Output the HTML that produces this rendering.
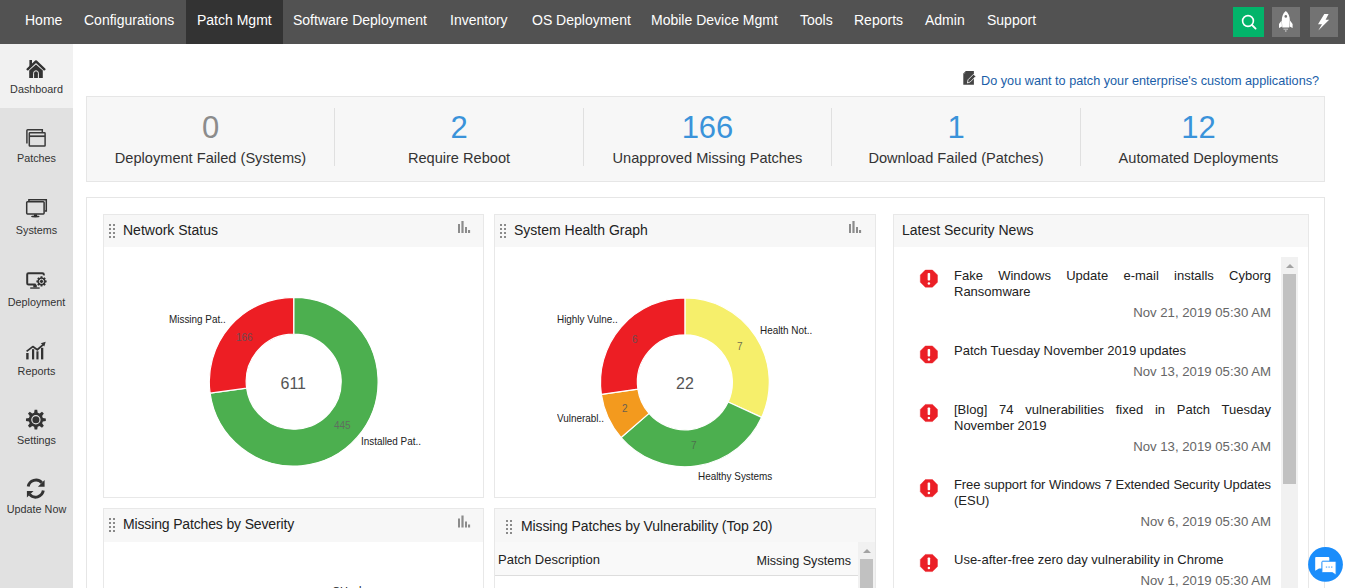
<!DOCTYPE html>
<html><head><meta charset="utf-8">
<style>
*{margin:0;padding:0;box-sizing:border-box}
html,body{width:1345px;height:588px;overflow:hidden;background:#fff;font-family:"Liberation Sans",sans-serif;color:#222}
.a{position:absolute;white-space:nowrap}
#nav{position:absolute;left:0;top:0;width:1345px;height:44px;background:#525252}
#nav .it{position:absolute;top:0;height:44px;line-height:40px;font-size:14px;color:#fff}
#nav .act{background:#333}
.nbtn{position:absolute;top:7px;height:30px}
#side{position:absolute;left:0;top:44px;width:73px;height:544px;background:#e1e1e1}
.si{position:absolute;left:0;width:73px;text-align:center;font-size:10.8px;color:#333}
.box{position:absolute;border:1px solid #e6e6e6}
.sum{background:#f7f7f7}
.num{position:absolute;font-size:31px;text-align:center;color:#3a93da}
.lbl{position:absolute;font-size:14.6px;text-align:center;color:#333}
.sep{position:absolute;top:108px;width:1px;height:58px;background:#e0e0e0}
.w{position:absolute;border:1px solid #e8e8e8;background:#fff}
.wh{position:absolute;left:0;top:0;right:0;height:33px;background:#f7f7f7}
.wt{position:absolute;top:0;line-height:33px;font-size:14px;color:#222}
.dots{position:absolute}
.dots i{position:absolute;width:2px;height:2px;background:#8a8a8a}
.news{position:absolute;font-size:13px;color:#222}
.nl{position:absolute;left:954px;width:317px;font-size:13px;color:#222;white-space:nowrap}
.nl.j{text-align:justify;text-align-last:justify}
.nd{position:absolute;left:1000px;width:271px;text-align:right;font-size:13.2px;color:#666;white-space:nowrap}
.cl{position:absolute;white-space:nowrap;font-size:11px;color:#222;transform:scaleX(0.9);transform-origin:0 0}
</style></head><body>
<div id="nav">
  <div class="it" style="left:25px">Home</div>
  <div class="it" style="left:84px">Configurations</div>
  <div class="it act" style="left:186px;width:97px;padding-left:11px">Patch Mgmt</div>
  <div class="it" style="left:293px">Software Deployment</div>
  <div class="it" style="left:450px">Inventory</div>
  <div class="it" style="left:532px">OS Deployment</div>
  <div class="it" style="left:651px">Mobile Device Mgmt</div>
  <div class="it" style="left:800px">Tools</div>
  <div class="it" style="left:854px">Reports</div>
  <div class="it" style="left:925px">Admin</div>
  <div class="it" style="left:987px">Support</div>
  <div class="nbtn" style="left:1233px;width:31px;background:#02b46a"></div>
  <div class="nbtn" style="left:1272px;width:28px;background:#737373"></div>
  <div class="nbtn" style="left:1310px;width:28px;background:#737373"></div>
</div>
<div id="side">
  <div style="position:absolute;left:0;top:0;width:73px;height:64px;background:#f1f1f1"></div>
  <div class="si" style="top:39px">Dashboard</div>
  <div class="si" style="top:108px">Patches</div>
  <div class="si" style="top:180px">Systems</div>
  <div class="si" style="top:252px">Deployment</div>
  <div class="si" style="top:321px">Reports</div>
  <div class="si" style="top:390px">Settings</div>
  <div class="si" style="top:459px">Update Now</div>
</div>
<!-- link -->
<div class="a" style="left:981px;top:74px;font-size:12.7px;color:#1a5ea8">Do you want to patch your enterprise's custom applications?</div>
<!-- summary -->
<div class="box sum" style="left:86px;top:96px;width:1239px;height:86px"></div>
<div class="sep" style="left:334px"></div>
<div class="sep" style="left:583px"></div>
<div class="sep" style="left:831px"></div>
<div class="sep" style="left:1080px"></div>
<div class="num" style="left:87px;width:247px;top:110px;color:#8c8c8c">0</div>
<div class="num" style="left:335px;width:248px;top:110px">2</div>
<div class="num" style="left:584px;width:247px;top:110px">166</div>
<div class="num" style="left:832px;width:248px;top:110px">1</div>
<div class="num" style="left:1081px;width:235px;top:110px">12</div>
<div class="lbl" style="left:87px;width:247px;top:149.5px">Deployment Failed (Systems)</div>
<div class="lbl" style="left:335px;width:248px;top:149.5px">Require Reboot</div>
<div class="lbl" style="left:584px;width:247px;top:149.5px">Unapproved Missing Patches</div>
<div class="lbl" style="left:832px;width:248px;top:149.5px">Download Failed (Patches)</div>
<div class="lbl" style="left:1081px;width:235px;top:149.5px">Automated Deployments</div>
<!-- container -->
<div class="box" style="left:86px;top:197px;width:1239px;height:420px"></div>
<!-- widgets -->
<div class="w" style="left:103px;top:214px;width:381px;height:284px"><div class="wh" style="height:32px"></div></div>
<div class="w" style="left:494px;top:214px;width:382px;height:284px"><div class="wh" style="height:32px"></div></div>
<div class="w" style="left:893px;top:214px;width:416px;height:400px"><div class="wh" style="height:32px"></div></div>
<div class="w" style="left:103px;top:508px;width:381px;height:100px"><div class="wh"></div></div>
<div class="w" style="left:494px;top:508px;width:382px;height:100px"><div class="wh"></div></div>
<div class="wt a" style="left:123px;top:214px">Network Status</div>
<div class="wt a" style="left:514px;top:214px">System Health Graph</div>
<div class="wt a" style="left:902px;top:214px">Latest Security News</div>
<div class="wt a" style="left:123px;top:508px;letter-spacing:-0.15px">Missing Patches by Severity</div>
<div class="wt a" style="left:521px;top:510px;letter-spacing:-0.1px">Missing Patches by Vulnerability (Top 20)</div>


<svg class="a" style="left:0;top:0" width="1345" height="588" viewBox="0 0 1345 588">
 <!-- nav icons -->
 <circle cx="1248" cy="21" r="5.4" fill="none" stroke="#fff" stroke-width="1.6"/>
 <line x1="1252" y1="25" x2="1255.6" y2="28.6" stroke="#fff" stroke-width="1.8" stroke-linecap="round"/>
 <path d="M1285.8,11 C1288.5,13 1289.8,16.5 1289.8,20 L1289.3,27.5 L1282.3,27.5 L1281.8,20 C1281.8,16.5 1283.1,13 1285.8,11 Z" fill="#fff"/>
 <circle cx="1285.8" cy="16.4" r="1.3" fill="#747474"/>
 <path d="M1281.6,20.5 L1279,24 L1279,28 L1282,26.5 Z M1290,20.5 L1292.6,24 L1292.6,28 L1289.6,26.5 Z" fill="#fff"/>
 <path d="M1283.5,28.5 H1288 V30 H1286.5 V32 H1285 V30 H1283.5 Z" fill="#aaa"/>
 <path d="M1324.3,14 L1328.6,14 L1325.6,19.8 L1329.2,19.8 L1318.3,30.6 L1322,24.2 L1318,24.2 Z" fill="#fff"/>
 <!-- sidebar icons -->
 <g fill="#333">
  <rect x="29.4" y="60" width="2.6" height="7"/>
  <polyline points="27.6,69.3 36,61.4 44.4,69.3" fill="none" stroke="#333" stroke-width="2.4" stroke-linecap="round" stroke-linejoin="round"/>
  <path d="M29.2,70.6 L36,64.4 L42.8,70.6 V78 H29.2 Z"/>
  <path d="M33.6,78 V73.2 A2.4,2.4 0 0 1 38.4,73.2 V78" fill="none" stroke="#f1f1f1" stroke-width="1"/>
 </g>
 <g fill="none" stroke="#3a3a3a" stroke-width="1.5">
  <path d="M26.9,143.5 V130.6 Q26.9,129.8 27.7,129.8 H42.3 V132.6" />
    <rect x="29.3" y="132.8" width="15.8" height="13.2" rx="0.6" fill="#e1e1e1"/>
  <line x1="29.3" y1="136.2" x2="45.1" y2="136.2" stroke-width="1.7"/>
 </g>
 <g fill="none" stroke="#333" stroke-width="1.5">
  <path d="M28.9,201 V199.8 H46.3 V211 H44.8"/>
  <rect x="26.7" y="201.8" width="17.4" height="12.1" rx="0.8" fill="#e1e1e1"/>
 </g>
 <rect x="34" y="214.5" width="3" height="1.6" fill="#222"/>
 <ellipse cx="35.3" cy="216.5" rx="4.2" ry="0.9" fill="#333"/>
 <g>
  <path d="M41,284.5 H28.5 Q27.2,284.5 27.2,283.2 V274.6 Q27.2,273.3 28.5,273.3 H42.5 Q43.8,273.3 43.8,274.6 V275.5" fill="none" stroke="#333" stroke-width="2"/>
  <rect x="33.3" y="285" width="3.5" height="2.5" fill="#333"/>
  <rect x="30.2" y="287.3" width="9.5" height="1.5" fill="#444"/>
  <circle cx="41.5" cy="281.4" r="6.2" fill="#e1e1e1"/>
  <path d="M40.27,277.70 L40.62,276.27 L42.38,276.27 L42.73,277.70 L43.25,277.91 L44.50,277.15 L45.75,278.40 L44.99,279.65 L45.20,280.17 L46.63,280.52 L46.63,282.28 L45.20,282.63 L44.99,283.15 L45.75,284.40 L44.50,285.65 L43.25,284.89 L42.73,285.10 L42.38,286.53 L40.62,286.53 L40.27,285.10 L39.75,284.89 L38.50,285.65 L37.25,284.40 L38.01,283.15 L37.80,282.63 L36.37,282.28 L36.37,280.52 L37.80,280.17 L38.01,279.65 L37.25,278.40 L38.50,277.15 L39.75,277.91 Z" fill="#333"/><circle cx="41.5" cy="281.4" r="2.1" fill="none" stroke="#e1e1e1" stroke-width="1"/><circle cx="41.5" cy="281.4" r="0.7" fill="#333"/>
 </g>
 <g fill="#333">
  <rect x="26.2" y="353" width="2.4" height="6.4"/>
  <rect x="32" y="349.2" width="2.2" height="10.2"/>
  <rect x="36.4" y="351.3" width="2.1" height="8.1"/>
  <rect x="41" y="347.8" width="2.3" height="11.6"/>
  <polyline points="26.6,351.4 32.8,346.6 37.3,349.8 43.2,344.6" fill="none" stroke="#333" stroke-width="1.8" stroke-linejoin="round"/>
  <path d="M45.7,341.8 L40.8,343.3 L44.3,346.6 Z"/>
 </g>
 <path d="M34.12,412.72 L34.60,409.78 L37.20,409.78 L37.68,412.72 L39.57,413.51 L41.99,411.77 L43.83,413.61 L42.09,416.03 L42.88,417.92 L45.82,418.40 L45.82,421.00 L42.88,421.48 L42.09,423.37 L43.83,425.79 L41.99,427.63 L39.57,425.89 L37.68,426.68 L37.20,429.62 L34.60,429.62 L34.12,426.68 L32.23,425.89 L29.81,427.63 L27.97,425.79 L29.71,423.37 L28.92,421.48 L25.98,421.00 L25.98,418.40 L28.92,417.92 L29.71,416.03 L27.97,413.61 L29.81,411.77 L32.23,413.51 Z" fill="#333"/><circle cx="35.9" cy="419.7" r="4.1" fill="none" stroke="#e1e1e1" stroke-width="1.2"/>
 <g fill="none" stroke="#333" stroke-width="2.9">
  <path d="M28.2,486.6 A7.8,7.8 0 0 1 41.8,482.8"/>
  <path d="M43.3,490.6 A7.8,7.8 0 0 1 29.7,494.4"/>
 </g>
 <path d="M44.6,480 L44.6,486.8 L37.9,486.8 Z M26.9,497.6 L26.9,490.9 L33.5,490.9 Z" fill="#333"/>

 <!-- network donut -->
 <g stroke="#fff" stroke-width="1.2" stroke-linejoin="round">
  <path d="M293.70,297.30 A84.4,84.4 0 1 1 210.08,393.16 L246.64,388.15 A47.5,47.5 0 1 0 293.70,334.20 Z" fill="#4caf4f"/>
  <path d="M210.08,393.16 A84.4,84.4 0 0 1 293.70,297.30 L293.70,334.20 A47.5,47.5 0 0 0 246.64,388.15 Z" fill="#ed1e24"/>
 </g>
 <g stroke="#fff" stroke-width="1.2" stroke-linejoin="round">
  <path d="M684.90,297.90 A84.4,84.4 0 0 1 761.67,417.36 L728.11,402.03 A47.5,47.5 0 0 0 684.90,334.80 Z" fill="#f6ef6b"/>
  <path d="M761.67,417.36 A84.4,84.4 0 0 1 621.11,437.57 L649.00,413.41 A47.5,47.5 0 0 0 728.11,402.03 Z" fill="#4caf4f"/>
  <path d="M621.11,437.57 A84.4,84.4 0 0 1 601.36,394.31 L637.88,389.06 A47.5,47.5 0 0 0 649.00,413.41 Z" fill="#f39a1e"/>
  <path d="M601.36,394.31 A84.4,84.4 0 0 1 684.90,297.90 L684.90,334.80 A47.5,47.5 0 0 0 637.88,389.06 Z" fill="#ed1e24"/>
 </g>
 <!-- widget header bar icons -->
 <g fill="#8c8c8c">
  <rect x="458" y="224" width="2" height="9"/><rect x="461.4" y="221" width="2.2" height="12"/><rect x="465" y="227" width="2" height="6"/><rect x="468" y="230" width="2.1" height="3"/>
  <rect x="849" y="224" width="2" height="9"/><rect x="852.4" y="221" width="2.2" height="12"/><rect x="856" y="227" width="2" height="6"/><rect x="859" y="230" width="2.1" height="3"/>
  <rect x="458" y="518.5" width="2" height="9"/><rect x="461.4" y="515.5" width="2.2" height="12"/><rect x="465" y="521.5" width="2" height="6"/><rect x="468" y="524.5" width="2.1" height="3"/>
 </g>
 <!-- drag handles -->
 <g fill="#8a8a8a">
  <rect x="109" y="224" width="2" height="2"/><rect x="113" y="224" width="2" height="2"/>
  <rect x="109" y="228" width="2" height="2"/><rect x="113" y="228" width="2" height="2"/>
  <rect x="109" y="232" width="2" height="2"/><rect x="113" y="232" width="2" height="2"/>
  <rect x="109" y="236" width="2" height="2"/><rect x="113" y="236" width="2" height="2"/>
  <rect x="500" y="224" width="2" height="2"/><rect x="504" y="224" width="2" height="2"/>
  <rect x="500" y="228" width="2" height="2"/><rect x="504" y="228" width="2" height="2"/>
  <rect x="500" y="232" width="2" height="2"/><rect x="504" y="232" width="2" height="2"/>
  <rect x="500" y="236" width="2" height="2"/><rect x="504" y="236" width="2" height="2"/>
  <rect x="109" y="518" width="2" height="2"/><rect x="113" y="518" width="2" height="2"/>
  <rect x="109" y="522" width="2" height="2"/><rect x="113" y="522" width="2" height="2"/>
  <rect x="109" y="526" width="2" height="2"/><rect x="113" y="526" width="2" height="2"/>
  <rect x="109" y="530" width="2" height="2"/><rect x="113" y="530" width="2" height="2"/>
  <rect x="506" y="520" width="2" height="2"/><rect x="510" y="520" width="2" height="2"/>
  <rect x="506" y="524" width="2" height="2"/><rect x="510" y="524" width="2" height="2"/>
  <rect x="506" y="528" width="2" height="2"/><rect x="510" y="528" width="2" height="2"/>
  <rect x="506" y="532" width="2" height="2"/><rect x="510" y="532" width="2" height="2"/>
 </g>
<polygon points="937.49,282.16 932.46,287.19 925.34,287.19 920.31,282.16 920.31,275.04 925.34,270.01 932.46,270.01 937.49,275.04" fill="#eb1f26" stroke="#eb1f26" stroke-width="0.4" stroke-linejoin="round"/><rect x="927.65" y="273.0" width="2.5" height="7.6" rx="0.8" fill="#fff"/><circle cx="928.9" cy="283.5" r="1.25" fill="#fff"/>
<polygon points="937.49,358.06 932.46,363.09 925.34,363.09 920.31,358.06 920.31,350.94 925.34,345.91 932.46,345.91 937.49,350.94" fill="#eb1f26" stroke="#eb1f26" stroke-width="0.4" stroke-linejoin="round"/><rect x="927.65" y="348.9" width="2.5" height="7.6" rx="0.8" fill="#fff"/><circle cx="928.9" cy="359.4" r="1.25" fill="#fff"/>
<polygon points="937.49,416.56 932.46,421.59 925.34,421.59 920.31,416.56 920.31,409.44 925.34,404.41 932.46,404.41 937.49,409.44" fill="#eb1f26" stroke="#eb1f26" stroke-width="0.4" stroke-linejoin="round"/><rect x="927.65" y="407.4" width="2.5" height="7.6" rx="0.8" fill="#fff"/><circle cx="928.9" cy="417.9" r="1.25" fill="#fff"/>
<polygon points="937.49,491.76 932.46,496.79 925.34,496.79 920.31,491.76 920.31,484.64 925.34,479.61 932.46,479.61 937.49,484.64" fill="#eb1f26" stroke="#eb1f26" stroke-width="0.4" stroke-linejoin="round"/><rect x="927.65" y="482.6" width="2.5" height="7.6" rx="0.8" fill="#fff"/><circle cx="928.9" cy="493.1" r="1.25" fill="#fff"/>
<polygon points="937.49,566.56 932.46,571.59 925.34,571.59 920.31,566.56 920.31,559.44 925.34,554.41 932.46,554.41 937.49,559.44" fill="#eb1f26" stroke="#eb1f26" stroke-width="0.4" stroke-linejoin="round"/><rect x="927.65" y="557.4" width="2.5" height="7.6" rx="0.8" fill="#fff"/><circle cx="928.9" cy="567.9" r="1.25" fill="#fff"/>
 <!-- link icon -->
 <path d="M965.8,71.1 H973.9 V84.8 H963.3 V73.6 Z" fill="#444"/><path d="M965.2,72 L965.2,73.6 L963.8,73.6 Z" fill="#999"/>
 <path d="M967.4,83 L968,79.8 L973.6,74.2 L975.8,76.4 L970.2,82 Z" fill="#444" stroke="#fff" stroke-width="0.8" stroke-linejoin="round"/>
</svg>

<!-- news -->
<div class="a" style="left:1281px;top:257px;width:17px;height:331px;background:#f1f1f1"></div>
<div class="a" style="left:1283px;top:274px;width:13px;height:210px;background:#c1c1c1"></div>
<div class="a" style="left:1285.5px;top:264px;width:0;height:0;border-left:4px solid transparent;border-right:4px solid transparent;border-bottom:4px solid #a3a3a3"></div>
<div class="nl j" style="top:268px">Fake Windows Update e-mail installs Cyborg</div>
<div class="nl" style="top:284px">Ransomware</div>
<div class="nd" style="top:305px">Nov 21, 2019 05:30 AM</div>
<div class="nl" style="top:342.5px">Patch Tuesday November 2019 updates</div>
<div class="nd" style="top:364px">Nov 13, 2019 05:30 AM</div>
<div class="nl j" style="top:402px">[Blog] 74 vulnerabilities fixed in Patch Tuesday</div>
<div class="nl" style="top:418px">November 2019</div>
<div class="nd" style="top:439px">Nov 13, 2019 05:30 AM</div>
<div class="nl j" style="top:477px;letter-spacing:-0.1px">Free support for Windows 7 Extended Security Updates</div>
<div class="nl" style="top:493px">(ESU)</div>
<div class="nd" style="top:514px">Nov 6, 2019 05:30 AM</div>
<div class="nl" style="top:552px">Use-after-free zero day vulnerability in Chrome</div>
<div class="nd" style="top:573px">Nov 1, 2019 05:30 AM</div>
<!-- table -->
<div class="a" style="left:495px;top:542px;width:363px;height:34px;background:#f9f9f9;border-bottom:1px solid #ddd"></div>
<div class="a" style="left:498px;top:552px;font-size:13px;color:#222">Patch Description</div>
<div class="a" style="left:700px;width:151px;text-align:right;top:553.5px;font-size:12.6px;color:#222">Missing Systems</div>
<div class="a" style="left:858px;top:542px;width:17px;height:46px;background:#f1f1f1"></div>
<div class="a" style="left:860px;top:559px;width:13px;height:30px;background:#c1c1c1"></div>
<div class="a" style="left:862.5px;top:549px;width:0;height:0;border-left:4px solid transparent;border-right:4px solid transparent;border-bottom:4px solid #a3a3a3"></div>
<div class="a" style="left:332px;top:584.5px;font-size:11px;color:#222">C</div><div class="a" style="left:340px;top:585px;font-size:11px;color:#222">H</div><div class="a" style="left:359px;top:583.5px;font-size:11px;color:#222">l</div>
<!-- chat -->
<svg class="a" style="left:0;top:0" width="1345" height="588" viewBox="0 0 1345 588">
 <circle cx="1325.5" cy="564.4" r="17.4" fill="#1a8dfb"/>
 <path d="M1316,557 H1328.4 Q1329.3,557 1329.3,557.9 V567.5 Q1329.3,568.4 1328.4,568.4 H1319 L1315.2,570.8 V557.9 Q1315.2,557 1316,557 Z" fill="#fff"/>
 <path d="M1322.8,561.2 H1335.2 Q1336.1,561.2 1336.1,562.1 V575.2 L1332.6,572.7 H1322.8 Q1321.9,572.7 1321.9,571.8 V562.1 Q1321.9,561.2 1322.8,561.2 Z" fill="#fff" stroke="#1a8dfb" stroke-width="1"/>
 <rect x="1325.8" y="566.4" width="1.4" height="1.4" fill="#6fb6fd"/><rect x="1328.4" y="566.4" width="1.4" height="1.4" fill="#6fb6fd"/><rect x="1331" y="566.4" width="1.4" height="1.4" fill="#6fb6fd"/>
</svg>

<div class="cl" style="left:169px;top:313px">Missing Pat..</div>
<div class="cl" style="left:361px;top:435px">Installed Pat..</div>
<div class="cl" style="left:557px;top:313px">Highly Vulne..</div>
<div class="cl" style="left:760px;top:324px">Health Not..</div>
<div class="cl" style="left:557px;top:412px">Vulnerabl..</div>
<div class="cl" style="left:698px;top:470px">Healthy Systems</div>
<div class="a" style="left:236px;top:332px;font-size:10px;color:#6e4a50">166</div>
<div class="a" style="left:334px;top:420px;font-size:10px;color:#5f6f5f">445</div>
<div class="a" style="left:632px;top:334px;font-size:10px;color:#6e4a50">6</div>
<div class="a" style="left:737px;top:341px;font-size:10px;color:#6f6f50">7</div>
<div class="a" style="left:622px;top:403px;font-size:10px;color:#6b6050">2</div>
<div class="a" style="left:691px;top:440px;font-size:10px;color:#4d6f4d">7</div>
<div class="a" style="left:280.5px;top:375px;font-size:16px;color:#555">611</div>
<div class="a" style="left:676px;top:375px;font-size:16px;color:#555">22</div>

</body></html>
